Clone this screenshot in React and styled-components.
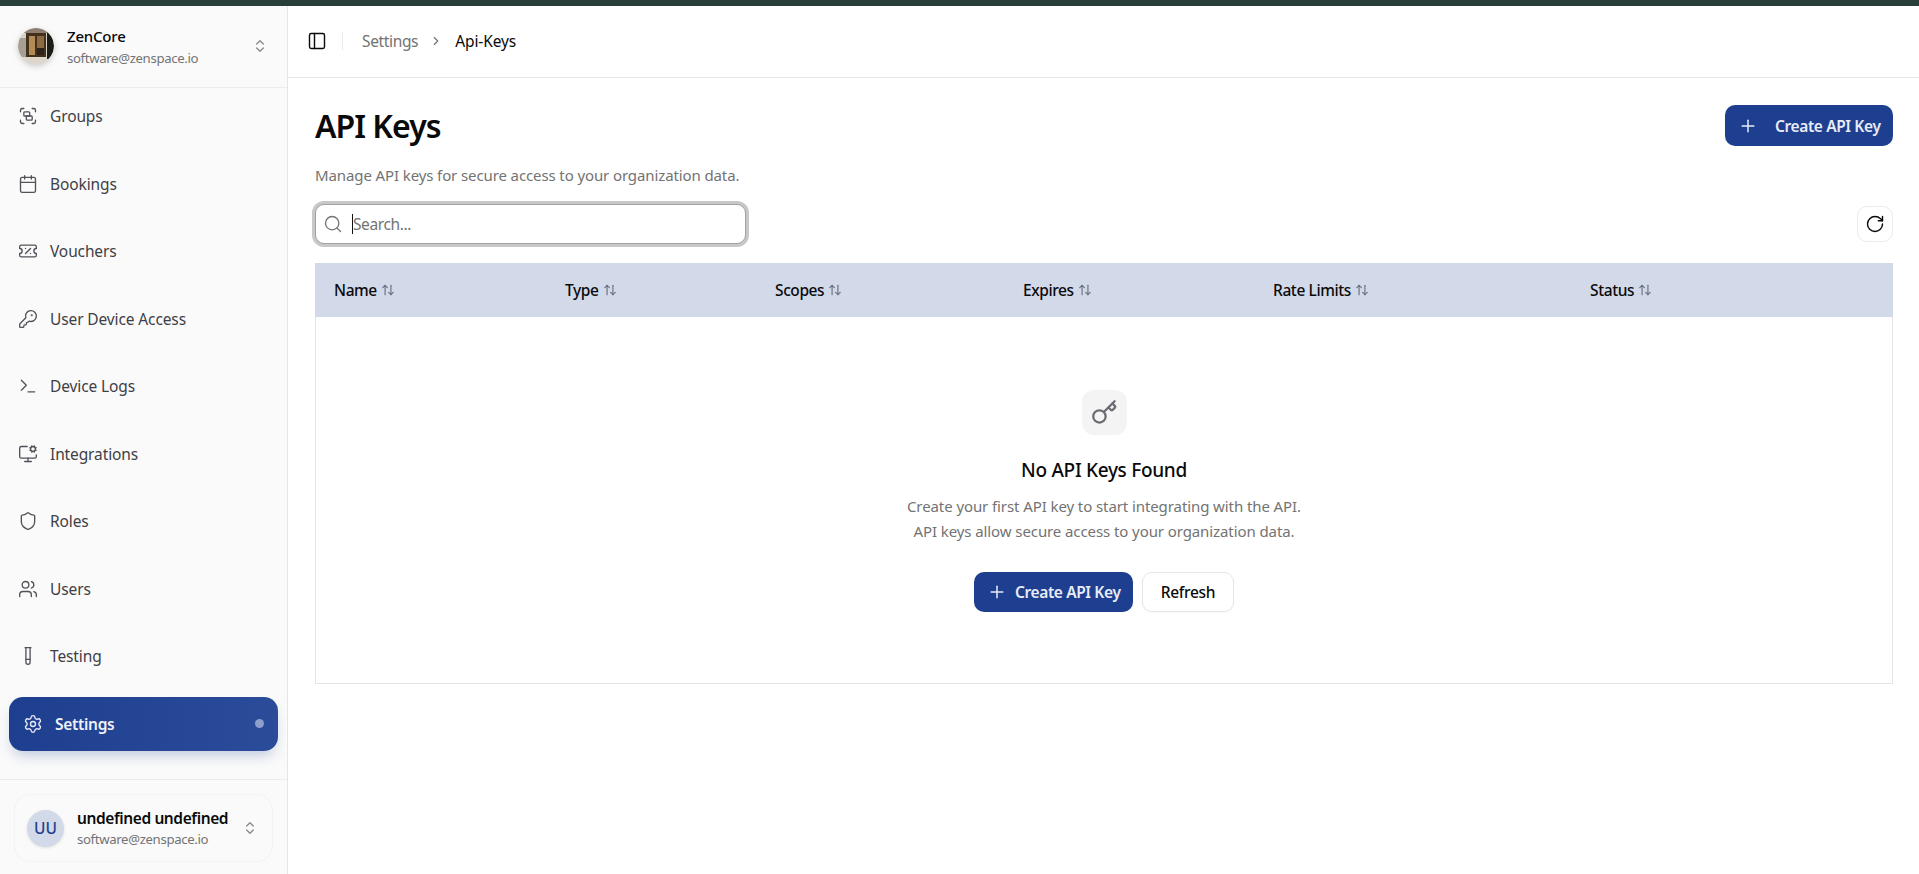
import React from "react";
import styled, { createGlobalStyle } from "styled-components";
import { Group, Calendar, TicketPercent, KeyRound, Terminal, MonitorCog, Shield, Users, TestTube, Settings, PanelLeft, Key, Search, Plus, RotateCw, ArrowUpDown, ChevronsUpDown, ChevronRight } from "lucide-react";

const Global = createGlobalStyle`
  html, body { margin: 0; height: 100%; background: #fff; }
  body { font-family: "Noto Sans", "Open Sans", Arial, sans-serif; color: #0a0a0a; overflow: hidden; }
  #root { height: 100%; }
  * { box-sizing: border-box; }
`;

const Page = styled.div`height: 874px; display: flex; flex-direction: column;`;
const TopStrip = styled.div`height: 6px; background: #2a3e39; flex: none;`;
const Shell = styled.div`flex: 1; display: flex; min-height: 0;`;

const Sidebar = styled.aside`
  width: 288px; flex: none; background: #fafafa; border-right: 1px solid #e6e6e6;
  display: flex; flex-direction: column;
`;
const OrgHeader = styled.div`
  height: 82px; flex: none; display: flex; align-items: center; padding: 0 19px 2px 18px;
  border-bottom: 1px solid #ececec;
`;
const OrgLogo = styled.svg`width: 36px; height: 36px; flex: none; border-radius: 50%; filter: drop-shadow(0 2px 3px rgba(0,0,0,.2));`;
const OrgText = styled.div`margin-left: 13px; flex: 1; min-width: 0; padding-top: 2px;`;
const Name = styled.div`font-size: 15px; font-weight: 500; line-height: 20px; letter-spacing: -0.2px; white-space: nowrap;`;
const Email = styled.div`font-size: 13.2px; line-height: 20px; margin-top: 2px; color: #737373; letter-spacing: -0.35px; white-space: nowrap;`;
const Expand = styled(ChevronsUpDown)`width: 16px; height: 16px; color: #8a8a8a; flex: none;`;

const Nav = styled.nav`flex: 1; display: flex; flex-direction: column; padding: 1px 9px 0; min-height: 0;`;
const Item = styled.a`
  flex: none; height: 54px; margin-bottom: 13.5px; display: flex; align-items: center; gap: 12px; padding-left: 9px;
  font-size: 15.5px; font-weight: 400; letter-spacing: -0.12px; color: #3f3f46;
`;
const ActiveItem = styled.a`
  flex: none; height: 54px; display: flex; align-items: center; gap: 12px; padding: 0 14px 0 14px;
  border-radius: 14px; color: #eef1f8; font-size: 15.5px; font-weight: 600; letter-spacing: -0.3px;
  background: linear-gradient(90deg, #1e3f8f, #2b4c99);
  box-shadow: 0 8px 14px -4px rgba(30,64,143,.28);
`;
const Dot = styled.span`width: 9px; height: 9px; border-radius: 50%; background: #8d9fcb; margin-left: auto;`;
const NavIcon = styled.span`
  display: flex; flex: none; color: #52525b;
  svg { width: 20px; height: 20px; stroke-width: 1.6; }
`;
const ActiveIcon = styled(NavIcon)`color: #e9edf7;`;

const Footer = styled.div`height: 95px; flex: none; border-top: 1px solid #ececec; padding: 14px 14px 0;`;
const UserCard = styled.div`
  height: 68px; border: 1px solid #f3f3f3; border-radius: 16px; display: flex; align-items: center; padding: 0 14px 0 12px;
`;
const Avatar = styled.div`
  width: 37px; height: 37px; flex: none; border-radius: 50%; background: #d2d9e9; color: #1e3f8f;
  display: flex; align-items: center; justify-content: center; font-size: 15.5px; font-weight: 500;
  box-shadow: 0 1px 3px rgba(0,0,0,.12);
`;
const UserText = styled.div`margin-left: 13px; flex: 1; min-width: 0; padding-top: 1px;`;
const UserName = styled(Name)`font-size: 15.5px; font-weight: 600; letter-spacing: -0.4px;`;
const UserEmail = styled(Email)`margin-top: 1px;`;

const Main = styled.main`flex: 1; min-width: 0; display: flex; flex-direction: column;`;
const TopBar = styled.header`
  height: 72px; flex: none; border-bottom: 1px solid #e8e8e8; display: flex; align-items: center; padding: 0 0 2px 19px;
`;
const SideToggle = styled(PanelLeft)`width: 20px; height: 20px; color: #0a0a0a; flex: none; stroke-width: 1.7;`;
const Sep = styled.span`width: 1px; height: 18px; background: #eaeaea; margin: 0 19px 0 15px;`;
const Crumb = styled.span`font-size: 15.5px; letter-spacing: -0.35px; color: #737373;`;
const CrumbNow = styled(Crumb)`color: #0a0a0a; letter-spacing: -0.1px;`;
const CrumbArrow = styled(ChevronRight)`width: 14px; height: 14px; color: #737373; margin: 0 12px 0 11px;`;

const Content = styled.div`padding: 0 26px 0 27px; flex: 1;`;
const TitleRow = styled.div`display: flex; justify-content: space-between; align-items: flex-start; padding-top: 27px;`;
const Title = styled.h1`margin: 0; font-size: 32px; line-height: 42px; font-weight: 600; letter-spacing: -1px;`;
const Desc = styled.p`margin: 17px 0 0; font-size: 15px; line-height: 22px; color: #737373; letter-spacing: -0.11px;`;

const Primary = styled.button`
  border: 0; background: #1e3f8f; color: #e8ecf6; font: inherit; font-weight: 600; padding: 0 0 0 13px;
  font-size: 15.5px; letter-spacing: -0.38px; display: inline-flex; align-items: center;
  svg { width: 20px; height: 20px; stroke-width: 1.8; }
`;
const CreateTop = styled(Primary)`width: 168px; height: 41px; gap: 17px; border-radius: 10px;`;
const CreateEmpty = styled(Primary)`width: 159px; height: 40px; gap: 8px; border-radius: 10px;`;
const Ghost = styled.button`
  height: 40px; width: 92px; border-radius: 10px; border: 1px solid #e7e7e7; background: #fff; color: #0a0a0a;
  font: inherit; font-size: 15.5px; font-weight: 500; letter-spacing: -0.3px; box-shadow: 0 1px 2px rgba(0,0,0,.04);
`;

const ToolRow = styled.div`display: flex; justify-content: space-between; align-items: center; margin-top: 16px; height: 44px;`;
const SearchBox = styled.div`
  width: 431px; height: 40px; border-radius: 9px; border: 1px solid #a1a1a1; background: #fff;
  box-shadow: 0 0 0 3px #c8c8c8; display: flex; align-items: center; padding-left: 7px; gap: 9px;
`;
const SearchIcon = styled(Search)`width: 20px; height: 20px; color: #737373; flex: none; stroke-width: 1.6;`;
const SearchText = styled.span`
  font-size: 15.5px; color: #737373; letter-spacing: -0.4px; border-left: 1px solid #111; line-height: 20px;
`;
const IconButton = styled.button`
  width: 36px; height: 36px; border: 1px solid #ebebeb; border-radius: 10px; background: #fff; display: flex;
  align-items: center; justify-content: center; padding: 0; color: #0a0a0a;
  svg { width: 20px; height: 20px; stroke-width: 1.7; }
`;

const Table = styled.div`margin-top: 17px; border: 1px solid #e5e5e5; border-top: 0; height: 421px; display: flex; flex-direction: column;`;
const Head = styled.div`
  height: 54px; flex: none; margin: 0 -1px; background: #d2d9e9; display: grid;
  grid-template-columns: 231px 210px 248px 250px 317px 1fr; align-items: center; padding-left: 19px;
`;
const Th = styled.div`display: flex; align-items: center; gap: 4px; font-size: 15.5px; font-weight: 500; letter-spacing: -0.4px; color: #0a0a0a;`;
const SortIcon = styled(ArrowUpDown)`width: 14px; height: 14px; color: #6b7280;`;

const Empty = styled.div`flex: 1; display: flex; flex-direction: column; align-items: center; padding-top: 73px;`;
const EmptyIcon = styled.div`
  width: 45px; height: 45px; border-radius: 12px; background: #f4f4f5; color: #6b6b73; display: flex;
  align-items: center; justify-content: center;
  svg { width: 27px; height: 27px; }
`;
const EmptyTitle = styled.h3`margin: 21px 0 0; font-size: 19px; line-height: 28px; font-weight: 500; letter-spacing: -0.3px;`;
const EmptyText = styled.p`margin: 10px 0 0; font-size: 15px; line-height: 25px; text-align: center; color: #737373; letter-spacing: -0.09px;`;
const Actions = styled.div`display: flex; gap: 9px; margin-top: 28px;`;

const navItems = [
  ["Groups", Group], ["Bookings", Calendar], ["Vouchers", TicketPercent], ["User Device Access", KeyRound],
  ["Device Logs", Terminal], ["Integrations", MonitorCog], ["Roles", Shield], ["Users", Users], ["Testing", TestTube],
];
const columns = ["Name", "Type", "Scopes", "Expires", "Rate Limits", "Status"];

const Logo = () => (
  <OrgLogo viewBox="0 0 36 36">
    <defs>
      <clipPath id="orgClip"><circle cx="18" cy="18" r="18" /></clipPath>
      <filter id="orgSoft"><feGaussianBlur stdDeviation="0.6" /></filter>
    </defs>
    <g clipPath="url(#orgClip)">
      <g filter="url(#orgSoft)">
        <rect width="36" height="36" fill="#d8d2c8" />
        <rect x="0" y="0" width="36" height="5" fill="#8f7f72" />
        <rect x="0" y="29" width="36" height="7" fill="#ddd6cb" />
        <rect x="0" y="10" width="8" height="19" fill="#a79f94" />
        <rect x="8" y="5" width="20" height="24" fill="#43301f" />
        <rect x="11" y="8" width="6" height="19" fill="#b48a55" />
        <rect x="19" y="8" width="7" height="12" fill="#8c6a42" />
        <rect x="19" y="20" width="7" height="7" fill="#2f241b" />
        <rect x="29" y="3" width="7" height="28" fill="#1d1a18" />
      </g>
    </g>
  </OrgLogo>
);

export default function App() {
  return (
    <Page>
      <Global />
      <TopStrip />
      <Shell>
        <Sidebar>
          <OrgHeader>
            <Logo />
            <OrgText>
              <Name>ZenCore</Name>
              <Email>software@zenspace.io</Email>
            </OrgText>
            <Expand />
          </OrgHeader>
          <Nav>
            {navItems.map(([label, Icon]) => (
              <Item key={label}><NavIcon><Icon /></NavIcon>{label}</Item>
            ))}
            <ActiveItem><ActiveIcon><Settings /></ActiveIcon>Settings<Dot /></ActiveItem>
          </Nav>
          <Footer>
            <UserCard>
              <Avatar>UU</Avatar>
              <UserText>
                <UserName>undefined undefined</UserName>
                <UserEmail>software@zenspace.io</UserEmail>
              </UserText>
              <Expand />
            </UserCard>
          </Footer>
        </Sidebar>
        <Main>
          <TopBar>
            <SideToggle />
            <Sep />
            <Crumb>Settings</Crumb>
            <CrumbArrow />
            <CrumbNow>Api-Keys</CrumbNow>
          </TopBar>
          <Content>
            <TitleRow>
              <div>
                <Title>API Keys</Title>
                <Desc>Manage API keys for secure access to your organization data.</Desc>
              </div>
              <CreateTop><Plus />Create API Key</CreateTop>
            </TitleRow>
            <ToolRow>
              <SearchBox><SearchIcon /><SearchText>Search...</SearchText></SearchBox>
              <IconButton aria-label="Refresh"><RotateCw /></IconButton>
            </ToolRow>
            <Table>
              <Head>
                {columns.map((c) => <Th key={c}>{c}<SortIcon /></Th>)}
              </Head>
              <Empty>
                <EmptyIcon><Key /></EmptyIcon>
                <EmptyTitle>No API Keys Found</EmptyTitle>
                <EmptyText>Create your first API key to start integrating with the API.<br />API keys allow secure access to your organization data.</EmptyText>
                <Actions>
                  <CreateEmpty><Plus />Create API Key</CreateEmpty>
                  <Ghost>Refresh</Ghost>
                </Actions>
              </Empty>
            </Table>
          </Content>
        </Main>
      </Shell>
    </Page>
  );
}
